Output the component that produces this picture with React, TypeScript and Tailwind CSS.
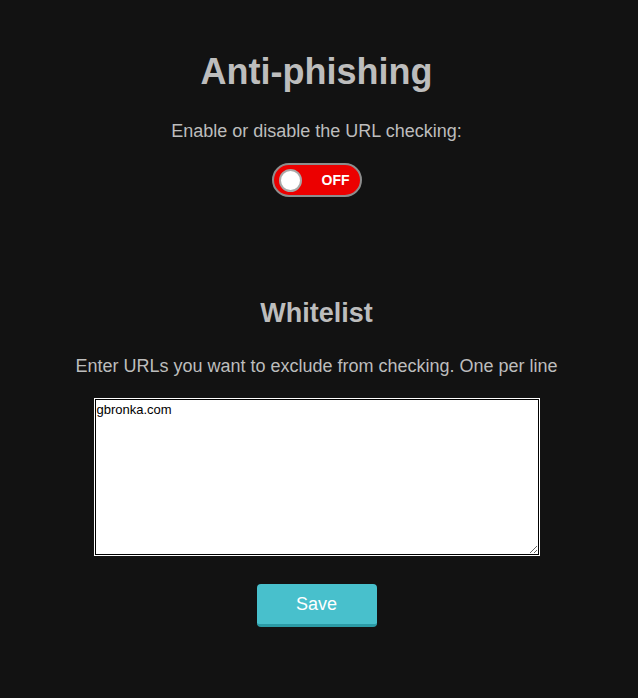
import React, { useEffect, useRef } from "react";

export default function App() {
  const ref = useRef<HTMLTextAreaElement>(null);
  useEffect(() => {
    const el = ref.current;
    if (el) {
      el.focus();
      const n = el.value.length;
      el.setSelectionRange(n, n);
    }
  }, []);
  return (
    <div
      className="min-h-[698px] w-full bg-[#121212] text-[#bdbdbd] flex flex-col items-center pr-[5px]"
      style={{ fontFamily: '"Liberation Sans", Arial, sans-serif' }}
    >
      <h1 className="mt-[51px] text-[36px] font-bold leading-[41px]">Anti-phishing</h1>
      <p className="mt-[29px] text-[18px] leading-[21px]">Enable or disable the URL checking:</p>
      <button
        type="button"
        className="mt-[21px] w-[90px] h-[34px] rounded-full border-2 border-[#8d8d8d] bg-[#ec0000] flex items-center justify-between pl-[5px] pr-[10px]"
      >
        <span className="block w-[23px] h-[23px] rounded-full bg-white border-2 border-[#a8a8a8]" />
        <span className="text-white font-bold text-[14px] leading-none">OFF</span>
      </button>
      <h2 className="mt-[101px] text-[27px] font-bold leading-[31px]">Whitelist</h2>
      <p className="mt-[27px] text-[18px] leading-[21px]">
        Enter URLs you want to exclude from checking. One per line
      </p>
      <textarea
        ref={ref}
        defaultValue="gbronka.com"
        className="mt-[22px] w-[444px] h-[156px] bg-white text-black border border-black outline outline-1 outline-white focus:outline focus:outline-1 focus:outline-white pt-[2px] px-[1px] text-[13px] leading-[15px] block"
        style={{ fontFamily: '"Liberation Sans", Arial, sans-serif' }}
      />
      <button
        type="button"
        className="mt-[29px] w-[120px] h-[43px] rounded-[4px] bg-[#48c0cc] border-b-[3px] border-[#2b9ba6] text-white text-[18px] leading-none"
      >
        Save
      </button>
    </div>
  );
}
